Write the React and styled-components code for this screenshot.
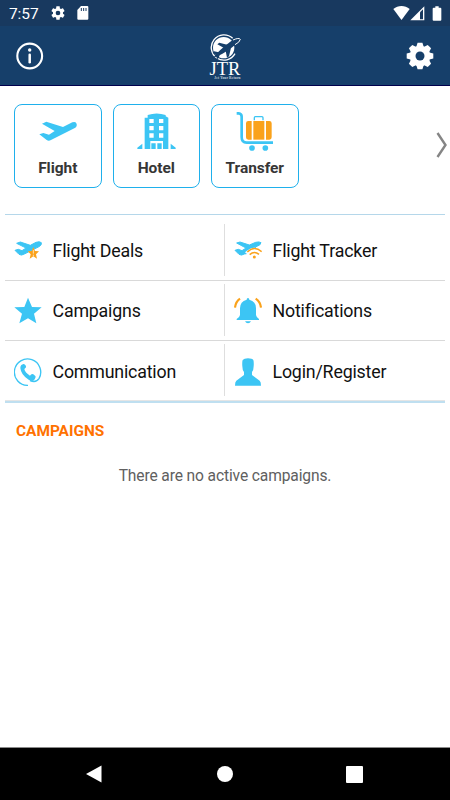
import React from 'react';
import styled, { createGlobalStyle } from 'styled-components';

const BLUE = '#3cc5f4';
const ORANGE = '#faa21b';

const GlobalStyle = createGlobalStyle`
  * { box-sizing: border-box; }

  body {
    margin: 0;
    background: #fff;
    font-family: Roboto, "Liberation Sans", sans-serif;
  }

  svg { display: block; flex: none; }
`

const Screen = styled.div`
  display: flex;
  flex-direction: column;
  width: 450px;
  height: 800px;
  overflow: hidden;
  background: #fff;
`

const StatusBar = styled.div`
  display: flex;
  align-items: center;
  height: 26px;
  padding: 0 8px 0 9px;
  background: #18395f;
  color: #fff;
`

const Clock = styled.span`
  width: 41px;
  font-size: 15.5px;
  letter-spacing: -0.1px;
  line-height: 26px;
  padding-top: 1px;
`

const Notices = styled.div`
  display: flex;
  align-items: center;
  gap: 10.5px;
`

const StatusIcons = styled.div`
  display: flex;
  align-items: center;
  margin-left: auto;

  svg:last-child { margin-left: 7px; }
`

const Header = styled.header`
  display: flex;
  align-items: center;
  justify-content: space-between;
  height: 60px;
  padding: 0 16px;
  background: #163f6a;
  border-bottom: 1px solid #00004c;
`

const Logo = styled.div`
  display: flex;
  flex-direction: column;
  align-items: center;
  width: 32px;
  padding-top: 3px;
  color: #fff;
  font-family: "Liberation Serif", serif;
`

const LogoName = styled.div`
  font-size: 18.5px;
  line-height: 14px;
  margin-top: 1px;
`

const LogoTag = styled.div`
  font-size: 3.4px;
  font-weight: bold;
  line-height: 4px;
  letter-spacing: 0.2px;
  margin-left: 5px;
  white-space: nowrap;
  opacity: 0.75;
`

const Services = styled.div`
  display: flex;
  align-items: center;
  height: 128px;
  padding: 0 2px 10px 14px;
`

const ServiceCard = styled.div`
  display: flex;
  flex-direction: column;
  align-items: center;
  width: 87.5px;
  height: 84px;
  margin: 2px 11px 0 0;
  border: 1.4px solid #1fb0ec;
  border-radius: 8px;
`

const ServiceIcon = styled.div`
  display: flex;
  justify-content: center;
  height: 50.5px;
  padding-top: ${props => props.top}px;
`

const ServiceLabel = styled.div`
  color: #363636;
  font-size: 15.5px;
  font-weight: 700;
  letter-spacing: -0.05px;
  line-height: 24px;
`

const More = styled.div`
  margin-left: auto;
`

const Menu = styled.div`
  display: grid;
  grid-template-columns: 220px 220px;
  grid-template-rows: 66px 60px 60px;
  margin: 0 5px;
  border-top: 1px solid #b5d7ea;
  border-bottom: 2px solid #bfdff0;
`

const MenuItem = styled.div`
  display: flex;
  align-items: center;
  padding: ${props => props.first ? 7 : props.last ? 2 : 1}px 0 0 9px;
  border-bottom: 1px solid ${props => props.last ? '#e5e5e5' : '#d9d9d9'};
  background: ${props => props.divided
    ? `linear-gradient(#dedede, #dedede) right 0 top ${props.first ? 9 : 3}px / 1.5px 52px no-repeat`
    : 'none'};
`

const MenuIcon = styled.div`
  display: flex;
  align-items: center;
  width: 28px;
  height: 28px;
`

const MenuLabel = styled.div`
  margin-left: 10.5px;
  color: #111;
  font-size: 17.8px;
  letter-spacing: -0.18px;
  line-height: 24px;
`

const Heading = styled.h2`
  margin: 17px 0 0 16px;
  color: #ff7200;
  font-size: 15.4px;
  font-weight: 700;
  line-height: 22px;
`

const Empty = styled.p`
  margin: 23px 0 0;
  color: #606060;
  font-size: 15.6px;
  letter-spacing: -0.13px;
  line-height: 22px;
  text-align: center;
`

const NavBar = styled.nav`
  display: flex;
  align-items: center;
  justify-content: space-between;
  height: 53px;
  margin-top: auto;
  padding: 0 87px 0 85px;
  border-top: 1px solid #8a8a8a;
  background: #000;
`

const GEAR = 'M19.43 12.98c.04-.32.07-.64.07-.98s-.03-.66-.07-.98l2.11-1.65c.19-.15.24-.42.12-.64l-2-3.46c-.12-.22-.39-.3-.61-.22l-2.49 1c-.52-.4-1.08-.73-1.69-.98l-.38-2.65C14.46 2.18 14.25 2 14 2h-4c-.25 0-.46.18-.49.42l-.38 2.65c-.61.25-1.17.59-1.69.98l-2.49-1c-.23-.09-.49 0-.61.22l-2 3.46c-.13.22-.07.49.12.64l2.11 1.65c-.04.32-.07.65-.07.98s.03.66.07.98l-2.11 1.65c-.19.15-.24.42-.12.64l2 3.46c.12.22.39.3.61.22l2.49-1c.52.4 1.08.73 1.69.98l.38 2.65c.03.24.24.42.49.42h4c.25 0 .46-.18.49-.42l.38-2.65c.61-.25 1.17-.59 1.69-.98l2.49 1c.23.09.49 0 .61-.22l2-3.46c.12-.22.07-.49-.12-.64zM12 15.5a3.5 3.5 0 1 1 0-7 3.5 3.5 0 0 1 0 7z'

const SmallGear = () => (
  <svg width="16" height="16" viewBox="0 0 24 24" fill="#fff"><path d={GEAR} /></svg>
)

const SdCard = () => (
  <svg width="12" height="14" viewBox="0 0 36 42">
    <path d="M12 0H31Q34 0 34 3V38Q34 41 31 41H4Q1 41 1 38V12Z" fill="#fff" />
    <path d="M13 6v9M20 6v9M27 6v9" stroke="#18395f" strokeWidth="3" />
  </svg>
)

const Wifi = () => (
  <svg width="17" height="15" viewBox="0 0 51 45"><path d="M1 9C15-3 36-3 50 9L25.500 42Z" fill="#fff" /></svg>
)

const Signal = () => (
  <svg width="15" height="15" viewBox="0 0 45 45">
    <path d="M43 1V43H1Z" fill="#fff" />
    <path d="M30 19V40H39V10Z" fill="#18395f" />
  </svg>
)

const Battery = () => (
  <svg width="10" height="15" viewBox="0 0 30 45">
    <path d="M10 1H20V5H25Q28 5 28 8V41Q28 44 25 44H5Q2 44 2 41V8Q2 5 5 5H10Z" fill="#fff" />
  </svg>
)

const Info = () => (
  <svg width="28" height="28" viewBox="0 0 28 28">
    <circle cx="13.700" cy="14" r="12.400" fill="none" stroke="#fff" strokeWidth="2.100" />
    <circle cx="13.700" cy="8" r="1.700" fill="#fff" />
    <path d="M13.700 12.800v7.400" stroke="#fff" strokeWidth="2.500" strokeLinecap="round" />
  </svg>
)

const Settings = () => (
  <svg width="28" height="28" viewBox="-14 -14 28 28">
    <g fill="#fff">
      {[0, 45, 90, 135].map(a => (
        <path key={a} transform={`rotate(${a})`} d="M-3.600 -9.500L-2.400 -13.300H2.400L3.600 -9.500V9.500L2.400 13.300H-2.400L-3.600 9.500Z" />
      ))}
      <circle r="10.300" />
    </g>
    <circle r="4.500" fill="#163f6a" />
  </svg>
)

const LogoMark = () => (
  <svg width="32" height="27" viewBox="59 25 96 81">
    <path d="M130 38A38 38 0 1 0 137 84" fill="none" stroke="#fff" strokeWidth="4" />
    <circle cx="103" cy="66" r="32" fill="#fff" />
    <path d="M72 96C88 76 112 55 134 41Q150 34 154 40Q152 50 138 57C122 70 104 82 86 91Z" fill="#163f6a" />
    <path d="M116 58L90 51L84 56L104 67ZM125 66L119 92L113 96L109 76ZM88 80L74 77L70 82L80 88L83 101L88 97L92 85Z" fill="#163f6a" />
    <path d="M131 43Q149 35 153 41Q151 50 137 57" fill="none" stroke="#fff" strokeWidth="3" />
  </svg>
)

const Plane = () => (
  <svg width="40" height="22" viewBox="100 75 120 66">
    <path d="M112 86L125 80L175 96L203 82Q214 78 216 87Q218 95 209 100L139 135Q132 139 126 135L104 118L116 114L133 119L150 108Z" fill={BLUE} />
  </svg>
)

const Hotel = () => (
  <svg width="39" height="37" viewBox="-1 0 117 111">
    <path d="M22 14H31V6Q58-3 85 6V10L93 14V108H77V84H39V108H22Z" fill={BLUE} />
    <path d="M0 108V104L15 92V108ZM100 108V92L115 104V108Z" fill={BLUE} />
    <path d="M36 18h13v12h-13zM65 18h13v12h-13zM36 39h13v13h-13zM65 39h13v13h-13zM36 61h13v13h-13zM65 61h13v13h-13z" fill="#fff" />
    <path d="M42 91h13v17h-13zM60 91h13v17h-13z" fill={BLUE} />
  </svg>
)

const Luggage = () => (
  <svg width="38" height="39" viewBox="257 50 114 117">
    <path d="M259 54H265Q274 55 274 64V125Q274 142 289 142H368" fill="none" stroke={BLUE} strokeWidth="8" />
    <path d="M312 75V67Q312 64 315 64H335Q338 64 338 67V75" fill="none" stroke={BLUE} strokeWidth="4" />
    <circle cx="305" cy="158" r="8.500" fill={BLUE} />
    <circle cx="345" cy="158" r="8.500" fill={BLUE} />
    <path d="M309 77H342V133H309Z" fill={ORANGE} />
    <path d="M304 77V133H294Q287 133 287 126V84Q287 77 294 77ZM347 77H357Q364 77 364 84V126Q364 133 357 133H347Z" fill={ORANGE} />
  </svg>
)

const Deals = () => (
  <svg width="28" height="20" viewBox="0 0 84 60">
    <path d="M8 7L19 3L49 13L66 4Q77 0 82 5Q84 10 77 16L31 39Q22 45 15 40L3 28L13 25L24 29L36 21Z" fill={BLUE} stroke={BLUE} strokeWidth="3" strokeLinejoin="round" />
    <path d="M58 18L63 30L75 31L66 40L69 53L58 46L47 53L50 40L41 31L53 30Z" fill={ORANGE} />
    <path d="M58 27V38M58 41V45" stroke="#fff" strokeWidth="2" />
  </svg>
)

const Tracker = () => (
  <svg width="28" height="20" viewBox="0 0 84 60">
    <path d="M8 6L18 3L46 12L65 4Q76 1 81 5L77 12L64 18L70 32L31 39Q22 45 15 40L3 28L13 25L24 29L36 21Z" fill={BLUE} stroke={BLUE} strokeWidth="3" strokeLinejoin="round" />
    <path d="M33 34Q60 7 89 32L61 58Z" fill="#fff" />
    <g fill="none" stroke={ORANGE} strokeWidth="4.500">
      <path d="M40 33Q61 12 83 32" />
      <path d="M47 41Q61 28 75 40" />
    </g>
    <circle cx="61" cy="48" r="4.500" fill={ORANGE} />
  </svg>
)

const Star = () => (
  <svg width="28" height="28" viewBox="0 0 84 84">
    <path d="M42 2L54 30L83 31L60 50L67 79L42 64L16 79L24 50L1 31L31 30Z" fill={BLUE} />
  </svg>
)

const Bell = () => (
  <svg width="28" height="28" viewBox="42 50 84 84">
    <path d="M80 58Q80 53 84 53Q88 53 88 58Q108 63 108 84V104Q109 111 117 116V119H50V116Q59 111 60 104V84Q60 63 80 58Z" fill={BLUE} />
    <path d="M75 123H93Q90 129 84 129Q78 129 75 123Z" fill={BLUE} />
    <path d="M60 55Q47 64 45 82M107 55Q121 64 123 82" fill="none" stroke={ORANGE} strokeWidth="6.500" />
  </svg>
)

const Phone = () => (
  <svg width="28" height="28" viewBox="42 230 84 84">
    <path d="M84 312A39.500 39.500 0 1 1 117 292C112 300 101 302 90 298" fill="none" stroke={BLUE} strokeWidth="4" />
    <path d="M64 251L70 248Q74 247 78 254Q80 259 73 263Q75 274 90 283Q94 276 100 279L106 284Q109 287 102 297Q96 302 86 295Q63 281 61 260Q61 254 64 251Z" fill={BLUE} />
  </svg>
)

const Person = () => (
  <svg width="28" height="28" viewBox="42 230 84 84">
    <path d="M68 236Q72 231 84 231Q97 231 100 236Q102 242 101 255Q101 266 96 272V281L119 298Q123 301 123 313H45Q45 301 49 298L72 281V272Q67 266 67 255Q66 242 68 236Z" fill={BLUE} />
  </svg>
)

const Chevron = () => (
  <svg width="12" height="26" viewBox="0 0 12 26">
    <path d="M1.500 1L9.500 13L1.500 25" fill="none" stroke="#858585" strokeWidth="2.400" />
  </svg>
)

const services = [
  { label: 'Flight', icon: <Plane />, top: 14.5 },
  { label: 'Hotel', icon: <Hotel />, top: 7.5 },
  { label: 'Transfer', icon: <Luggage />, top: 6.5 },
]

const items = [
  { label: 'Flight Deals', icon: <Deals /> },
  { label: 'Flight Tracker', icon: <Tracker /> },
  { label: 'Campaigns', icon: <Star /> },
  { label: 'Notifications', icon: <Bell /> },
  { label: 'Communication', icon: <Phone /> },
  { label: 'Login/Register', icon: <Person /> },
]

const App = () => {
  return (
    <Screen>
      <GlobalStyle />
      <StatusBar>
        <Clock>7:57</Clock>
        <Notices>
          <SmallGear />
          <SdCard />
        </Notices>
        <StatusIcons>
          <Wifi />
          <Signal />
          <Battery />
        </StatusIcons>
      </StatusBar>

      <Header>
        <Info />
        <Logo>
          <LogoMark />
          <LogoName>JTR</LogoName>
          <LogoTag>Jet Your Return</LogoTag>
        </Logo>
        <Settings />
      </Header>

      <Services>
        {services.map(s => (
          <ServiceCard key={s.label}>
            <ServiceIcon top={s.top}>{s.icon}</ServiceIcon>
            <ServiceLabel>{s.label}</ServiceLabel>
          </ServiceCard>
        ))}
        <More><Chevron /></More>
      </Services>

      <Menu>
        {items.map((item, i) => (
          <MenuItem key={item.label} first={i < 2} last={i > 3} divided={i % 2 === 0}>
            <MenuIcon>{item.icon}</MenuIcon>
            <MenuLabel>{item.label}</MenuLabel>
          </MenuItem>
        ))}
      </Menu>

      <Heading>CAMPAIGNS</Heading>
      <Empty>There are no active campaigns.</Empty>

      <NavBar>
        <svg width="18" height="18" viewBox="0 0 18 18"><path d="M1 9L16.500 0.500V17.500Z" fill="#fff" /></svg>
        <svg width="18" height="18" viewBox="0 0 18 18"><circle cx="9" cy="9" r="8" fill="#fff" /></svg>
        <svg width="17" height="17" viewBox="0 0 17 17"><rect width="17" height="17" rx="1" fill="#fff" /></svg>
      </NavBar>
    </Screen>
  )
}

export default App;
